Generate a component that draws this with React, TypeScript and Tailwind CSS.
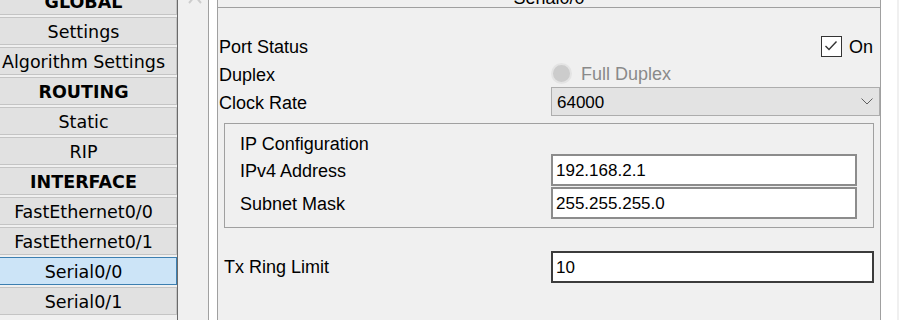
import React from 'react';

const navItems: { label: string; header?: boolean; active?: boolean }[] = [
  { label: 'GLOBAL', header: true },
  { label: 'Settings' },
  { label: 'Algorithm Settings' },
  { label: 'ROUTING', header: true },
  { label: 'Static' },
  { label: 'RIP' },
  { label: 'INTERFACE', header: true },
  { label: 'FastEthernet0/0' },
  { label: 'FastEthernet0/1' },
  { label: 'Serial0/0', active: true },
  { label: 'Serial0/1' },
];

const sans = "font-['Liberation_Sans',Arial,sans-serif]";

const NavButton: React.FC<{ label: string; header?: boolean; active?: boolean }> = ({ label, header, active }) => (
  <div
    className={`h-[28px] shrink-0 flex items-center justify-center pt-[3px] border text-[17.5px] text-black leading-none ${
      header ? 'font-bold' : ''
    } ${active ? 'bg-[#cce4f7] border-[#3c7fb1]' : 'bg-[#e1e1e1] border-[#c4c4c4]'}`}
  >
    {label}
  </div>
);

export default function App() {
  return (
    <div className="w-[899px] h-[320px] overflow-hidden bg-[#f0f0f0] flex">
      {/* interface list */}
      <div className="w-[177px] shrink-0 overflow-hidden font-['DejaVu_Sans',Verdana,sans-serif]">
        <div className="-ml-[10px] -mt-[13px] w-[187px] flex flex-col gap-[2px]">
          {navItems.map((item) => (
            <NavButton key={item.label} {...item} />
          ))}
        </div>
      </div>
      <div className="w-px shrink-0 bg-[#6a6a6a]" />
      <div className="w-[30px] shrink-0 overflow-hidden">
        <svg width="14" height="9" viewBox="0 0 14 9" className="ml-[10px] -mt-[5px]">
          <polyline points="1,8 7,1 13,8" fill="none" stroke="#cdcdcd" strokeWidth="2" />
        </svg>
      </div>
      <div className="w-px shrink-0 bg-[#a0a0a0]" />
      <div className="w-[8px] shrink-0 bg-white" />

      {/* config panel */}
      <div className={`w-[664px] shrink-0 border-x border-[#a0a0a0] flex flex-col text-black ${sans}`}>
        <div className="h-[21px] -mt-[13px] shrink-0 border-b border-[#a0a0a0] text-center text-[18px] leading-[20px] pt-px">
          Serial0/0
        </div>

        <div className="pl-[1px] pt-[24px] text-[18px]">
          <div className="h-[28px] flex items-center">
            <span className="w-[332px] pt-[3px]">Port Status</span>
            <div className="flex-1 flex items-center justify-end pr-[7px] gap-[7px]">
              <span className="w-[21px] h-[21px] border-[1.5px] border-[#333333] bg-white flex items-center justify-center">
                <svg width="14" height="12" viewBox="0 0 14 12">
                  <polyline points="1.5,6 5,9.5 12.5,1.5" fill="none" stroke="#333333" strokeWidth="1.4" />
                </svg>
              </span>
              <span className="pt-[2px]">On</span>
            </div>
          </div>

          <div className="h-[27px] flex items-center">
            <span className="w-[332px] pt-[3px]">Duplex</span>
            <span className="w-[21px] h-[21px] rounded-full border-2 border-[#e4e4e4] bg-[#cccccc]" />
            <span className="ml-[9px] pt-[2px] text-[#8a8a8a]">Full Duplex</span>
          </div>

          <div className="h-[29px] flex items-center">
            <span className="w-[332px] pt-[3px]">Clock Rate</span>
            <div className="flex-1 h-full border border-[#adadad] bg-[#e3e3e3] flex items-center pl-[5px] pr-[6px] text-[17px]">
              <span className="flex-1 pt-[2px]">64000</span>
              <svg width="12" height="7" viewBox="0 0 12 7">
                <polyline points="0.5,0.5 6,6 11.5,0.5" fill="none" stroke="#606060" strokeWidth="1" />
              </svg>
            </div>
          </div>
        </div>

        <div className="mt-[7px] mx-[6px] border border-[#a0a0a0] pl-[15px] pb-[8px] text-[18px]">
          <div className="h-[30px] pt-[10px] leading-[20px]">IP Configuration</div>
          <div className="h-[33px] flex items-start">
            <span className="w-[311px] h-[32px] flex items-center pt-[3px]">IPv4 Address</span>
            <div className="w-[306px] h-[32px] border-2 border-[#8c8c8c] bg-white flex items-center pl-[3px] pt-px text-[17px]">
              192.168.2.1
            </div>
          </div>
          <div className="h-[32px] flex items-start">
            <span className="w-[311px] h-[32px] flex items-center pt-[2px]">Subnet Mask</span>
            <div className="w-[306px] h-[32px] border-2 border-[#8c8c8c] bg-white flex items-center pl-[3px] pt-px text-[17px]">
              255.255.255.0
            </div>
          </div>
        </div>

        <div className="mt-[23px] ml-[6px] h-[32px] flex items-center text-[18px]">
          <span className="w-[327px] pt-px">Tx Ring Limit</span>
          <div className="w-[323px] h-[32px] border-2 border-[#3c3c3c] bg-white flex items-center pl-[3px] pt-px text-[17px]">
            10
          </div>
        </div>
      </div>

      <div className="w-[16px] shrink-0 bg-white" />
    </div>
  );
}
